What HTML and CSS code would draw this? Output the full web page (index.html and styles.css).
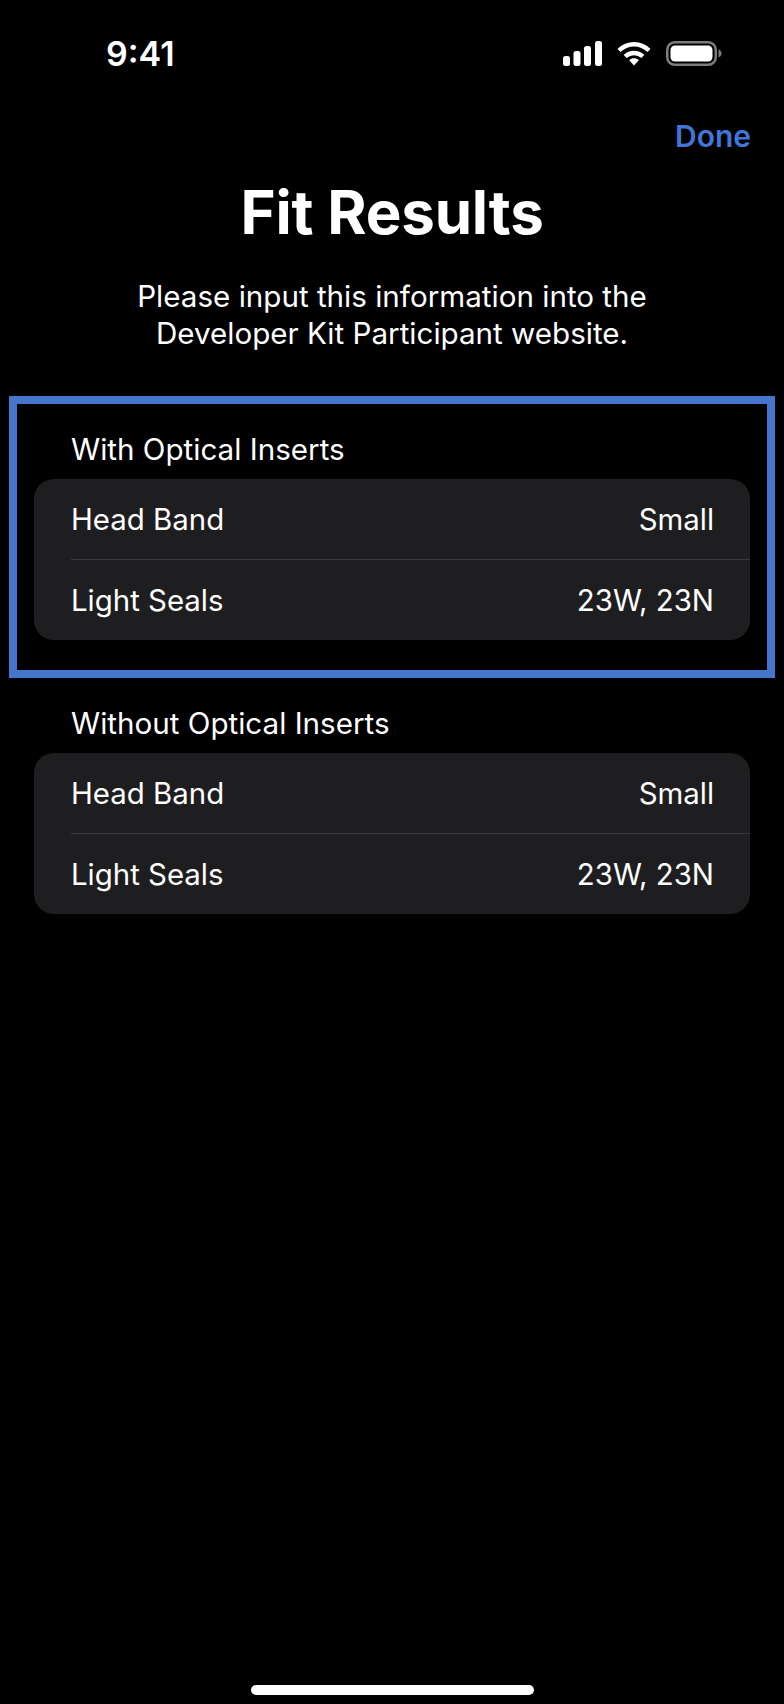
FILE: index.html
```html
<!DOCTYPE html>
<html lang="en">
<head>
    <meta charset="UTF-8">
    <meta name="viewport" content="width=device-width, initial-scale=1.0">
    <title>Fit Results</title>
    <link rel="stylesheet" href="styles.css">
</head>
<body>
    <div class="status-bar">
        <span class="time">9:41</span>
        <div class="status-icons">
            <svg class="signal" width="39" height="25" viewBox="0 0 39 25" fill="#fff">
                <rect x="0" y="15" width="7" height="10" rx="2.5"/>
                <rect x="10.5" y="10" width="7" height="15" rx="2.5"/>
                <rect x="21" y="5" width="7" height="20" rx="2.5"/>
                <rect x="32" y="0" width="7" height="25" rx="2.5"/>
            </svg>
            <svg class="wifi" width="34" height="25" viewBox="0 0 34 25" fill="none" stroke="#fff" stroke-width="4.4">
                <path d="M2 9.5C10.500 1.200 23.500 1.200 32 9.500"/>
                <path d="M8.200 15.500C13.200 10.800 20.800 10.800 25.800 15.500"/>
                <path d="M12.200 19.200L17 24.500L21.800 19.200C19 16.700 15 16.700 12.200 19.200Z" fill="#fff" stroke="none"/>
            </svg>
            <svg class="battery" width="56" height="25" viewBox="0 0 56 25">
                <rect x="1.250" y="1.250" width="48.500" height="22.500" rx="7.500" fill="none" stroke="#7d7d7d" stroke-width="2.500"/>
                <rect x="4.500" y="4.500" width="42" height="16" rx="4.500" fill="#fff"/>
                <path d="M52.500 8.500C54.500 9.200 55.500 10.700 55.500 12.500C55.500 14.300 54.500 15.800 52.500 16.500Z" fill="#7d7d7d"/>
            </svg>
        </div>
    </div>

    <div class="nav">
        <a class="done" href="#">Done</a>
    </div>

    <h1 class="title">Fit Results</h1>
    <p class="subtitle">Please input this information into the<br>Developer Kit Participant website.</p>

    <div class="highlight">
        <section class="group">
            <h2 class="group-title">With Optical Inserts</h2>
            <div class="card">
                <div class="row"><span>Head Band</span><span>Small</span></div>
                <div class="row"><span>Light Seals</span><span>23W, 23N</span></div>
            </div>
        </section>
    </div>

    <section class="group group-plain">
        <h2 class="group-title">Without Optical Inserts</h2>
        <div class="card">
            <div class="row"><span>Head Band</span><span>Small</span></div>
            <div class="row"><span>Light Seals</span><span>23W, 23N</span></div>
        </div>
    </section>

    <div class="home-bar"></div>
</body>
</html>
```

FILE: styles.css
```css
* {
    box-sizing: border-box;
}

body {
    margin: 0;
    width: 784px;
    height: 1704px;
    background-color: #000000;
    color: #ffffff;
    font-family: Inter, "Liberation Sans", sans-serif;
    display: flex;
    flex-direction: column;
    overflow: hidden;
}

.status-bar {
    display: flex;
    justify-content: space-between;
    align-items: center;
    height: 25px;
    margin-top: 41px;
    padding: 0 62px 0 106px;
}

.time {
    font-size: 34px;
    font-weight: 600;
    line-height: 25px;
}

.status-icons {
    display: flex;
    align-items: center;
    gap: 15px;
}

.status-icons svg {
    display: block;
}

.nav {
    display: flex;
    justify-content: flex-end;
    padding: 52px 33px 0 0;
}

.done {
    color: #3f76d8;
    font-size: 30px;
    font-weight: 600;
    line-height: 36px;
    text-decoration: none;
}

.title {
    margin: 23px 0 0;
    font-size: 60px;
    font-weight: 700;
    line-height: 70px;
    letter-spacing: -0.2px;
    text-align: center;
}

.subtitle {
    margin: 31px 0 0;
    font-size: 29.6px;
    font-weight: 400;
    line-height: 37px;
    text-align: center;
}

.highlight {
    margin: 44px 9px 0 9px;
    height: 282px;
    border: 8px solid #4477cc;
    padding: 0 17px;
}

.group-title {
    margin: 0;
    padding-left: 37px;
    font-size: 29.6px;
    font-weight: 400;
    line-height: 37px;
}

.highlight .group-title {
    padding-top: 27px;
    margin-bottom: 11px;
}

.group-plain {
    margin: 27px 34px 0;
}

.group-plain .group-title {
    margin-bottom: 11px;
}

.card {
    background-color: #1e1e20;
    border-radius: 20px;
    padding-left: 37px;
    height: 161px;
}

.row {
    display: flex;
    justify-content: space-between;
    align-items: center;
    height: 80px;
    padding-right: 36px;
    font-size: 29.4px;
    line-height: 37px;
}

.row + .row {
    height: 81px;
    border-top: 1px solid #39393b;
}

.home-bar {
    position: absolute;
    left: 251px;
    top: 1685px;
    width: 283px;
    height: 10px;
    border-radius: 5px;
    background-color: #ffffff;
}
```
